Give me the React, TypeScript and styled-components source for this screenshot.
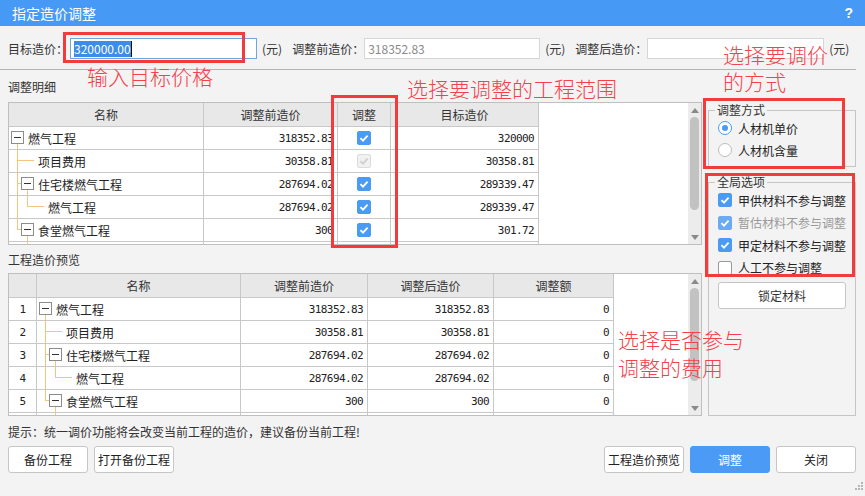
import React from "react";
import styled, { createGlobalStyle } from "styled-components";

const GlobalStyle = createGlobalStyle`
  html, body {
    margin: 0;
    padding: 0;
    background: #f3f3f3;
  }
  body {
    font-family: "Noto Sans CJK SC", "Noto Sans", sans-serif;
    font-size: 12px;
    color: #333;
  }
`;

type TreeKind = "root" | "leaf1" | "branch" | "leaf2" | "branchLast" | "tail";
type CheckState = "on" | "off" | "disabled" | "dim";

interface CostRow {
  name: string;
  kind: TreeKind;
  before: string;
  check: CheckState;
  target: string;
  after: string;
  delta: string;
}

const rows: CostRow[] = [
  { name: "燃气工程", kind: "root", before: "318352.83", check: "on", target: "320000", after: "318352.83", delta: "0" },
  { name: "项目费用", kind: "leaf1", before: "30358.81", check: "disabled", target: "30358.81", after: "30358.81", delta: "0" },
  { name: "住宅楼燃气工程", kind: "branch", before: "287694.02", check: "on", target: "289339.47", after: "287694.02", delta: "0" },
  { name: "燃气工程", kind: "leaf2", before: "287694.02", check: "on", target: "289339.47", after: "287694.02", delta: "0" },
  { name: "食堂燃气工程", kind: "branchLast", before: "300", check: "on", target: "301.72", after: "300", delta: "0" },
  { name: "", kind: "tail", before: "", check: "off", target: "", after: "", delta: "" },
];

const detailCols = "195px 134px 53px 148px";
const previewCols = "28px 204px 127px 126px 120px";
const LINE = "#f5c580";

const ExpandBox = ({ x }: { x: number }) => (
  <>
    <rect x={x + 0.5} y={4.5} width={12} height={12} fill="#fff" stroke="#8c8c8c" />
    <line x1={x + 3} y1={10.5} x2={x + 10} y2={10.5} stroke="#333" />
  </>
);

const TreeGuide = ({ kind }: { kind: TreeKind }) => {
  const w = kind === "root" ? 19 : kind === "leaf2" ? 39 : 29;
  return (
    <GuideSvg width={w} height={22} viewBox={`0 0 ${w} 22`}>
      {kind === "root" && (
        <>
          <line x1={8.5} y1={17} x2={8.5} y2={22} stroke={LINE} />
          <ExpandBox x={2} />
        </>
      )}
      {kind === "leaf1" && (
        <>
          <line x1={8.5} y1={0} x2={8.5} y2={22} stroke={LINE} />
          <line x1={8} y1={10.5} x2={25} y2={10.5} stroke={LINE} />
        </>
      )}
      {kind === "branch" && (
        <>
          <line x1={8.5} y1={0} x2={8.5} y2={22} stroke={LINE} />
          <line x1={8} y1={10.5} x2={12} y2={10.5} stroke={LINE} />
          <line x1={18.5} y1={17} x2={18.5} y2={22} stroke={LINE} />
          <ExpandBox x={12} />
        </>
      )}
      {kind === "leaf2" && (
        <>
          <line x1={8.5} y1={0} x2={8.5} y2={22} stroke={LINE} />
          <line x1={18.5} y1={0} x2={18.5} y2={10.5} stroke={LINE} />
          <line x1={18} y1={10.5} x2={35} y2={10.5} stroke={LINE} />
        </>
      )}
      {kind === "branchLast" && (
        <>
          <line x1={8.5} y1={0} x2={8.5} y2={10.5} stroke={LINE} />
          <line x1={8} y1={10.5} x2={12} y2={10.5} stroke={LINE} />
          <line x1={18.5} y1={17} x2={18.5} y2={22} stroke={LINE} />
          <ExpandBox x={12} />
        </>
      )}
      {kind === "tail" && <line x1={18.5} y1={0} x2={18.5} y2={22} stroke={LINE} />}
    </GuideSvg>
  );
};

const Check = ({ state }: { state: CheckState }) => (
  <CheckBox $state={state}>
    {state !== "off" && (
      <svg width="14" height="14" viewBox="0 0 14 14">
        <path
          d="M3.4 7.2 L6 9.7 L10.6 4.6"
          fill="none"
          stroke={state === "disabled" ? "#cfcfcf" : "#fff"}
          strokeWidth="1.8"
        />
      </svg>
    )}
  </CheckBox>
);

const Scrollbar = () => (
  <ScrollTrack>
    <ArrowBox>
      <svg width="8" height="5" viewBox="0 0 8 5">
        <polygon points="0,5 8,5 4,0" fill="#8a8a8a" />
      </svg>
    </ArrowBox>
    <Thumb />
    <Spacer />
    <ArrowBox>
      <svg width="8" height="5" viewBox="0 0 8 5">
        <polygon points="0,0 8,0 4,5" fill="#8a8a8a" />
      </svg>
    </ArrowBox>
  </ScrollTrack>
);

export default function App() {
  return (
    <>
      <GlobalStyle />
      <Dialog>
        <TitleBar>
          <span>指定造价调整</span>
          <Help>?</Help>
        </TitleBar>
        <Body>
          <TopRow>
            <FieldLabel $gap={2}>目标造价：</FieldLabel>
            <InputBox $w={187} $focused>
              <Selected>320000.00</Selected>
              <Caret />
            </InputBox>
            <Unit>(元)</Unit>
            <FieldLabel $gap={0}>调整前造价：</FieldLabel>
            <InputBox $w={176}>
              <Muted>318352.83</Muted>
            </InputBox>
            <Unit>(元)</Unit>
            <FieldLabel $gap={0}>调整后造价：</FieldLabel>
            <InputBox $w={177} />
            <Unit $last>(元)</Unit>
          </TopRow>
          <Divider />
          <Main>
            <LeftCol>
              <SectionLabel $h={32}>调整明细</SectionLabel>
              <Frame>
                <TableArea>
                  <Row $cols={detailCols} $head>
                    <Cell $head $align="center">名称</Cell>
                    <Cell $head $align="center">调整前造价</Cell>
                    <Cell $head $align="center">调整</Cell>
                    <Cell $head $align="center">目标造价</Cell>
                  </Row>
                  {rows.map((r, i) => (
                    <Row $cols={detailCols} key={i}>
                      <TreeCell>
                        <TreeGuide kind={r.kind} />
                        <span>{r.name}</span>
                      </TreeCell>
                      <Cell $align="right" $mono>{r.before}</Cell>
                      <Cell $align="center">{r.kind !== "tail" && <Check state={r.check} />}</Cell>
                      <Cell $align="right" $mono>{r.target}</Cell>
                    </Row>
                  ))}
                </TableArea>
                <Scrollbar />
              </Frame>
              <SectionLabel $h={28}>工程造价预览</SectionLabel>
              <Frame>
                <TableArea>
                  <Row $cols={previewCols} $head>
                    <Cell $head />
                    <Cell $head $align="center">名称</Cell>
                    <Cell $head $align="center">调整前造价</Cell>
                    <Cell $head $align="center">调整后造价</Cell>
                    <Cell $head $align="center">调整额</Cell>
                  </Row>
                  {rows.map((r, i) => (
                    <Row $cols={previewCols} key={i}>
                      <Cell $align="center" $mono>{r.kind !== "tail" ? i + 1 : ""}</Cell>
                      <TreeCell>
                        <TreeGuide kind={r.kind} />
                        <span>{r.name}</span>
                      </TreeCell>
                      <Cell $align="right" $mono>{r.before}</Cell>
                      <Cell $align="right" $mono>{r.after}</Cell>
                      <Cell $align="right" $mono>{r.delta}</Cell>
                    </Row>
                  ))}
                </TableArea>
                <Scrollbar />
              </Frame>
            </LeftCol>
            <RightCol>
              <Group>
                <Legend>调整方式</Legend>
                <OptionRow $h={22}>
                  <Radio $on />
                  <span>人材机单价</span>
                </OptionRow>
                <OptionRow $h={22}>
                  <Radio />
                  <span>人材机含量</span>
                </OptionRow>
              </Group>
              <Group $grow>
                <Legend>全局选项</Legend>
                <OptionRow $h={22.5}>
                  <Check state="on" />
                  <span>甲供材料不参与调整</span>
                </OptionRow>
                <OptionRow $h={22.5} $muted>
                  <Check state="dim" />
                  <span>暂估材料不参与调整</span>
                </OptionRow>
                <OptionRow $h={22.5}>
                  <Check state="on" />
                  <span>甲定材料不参与调整</span>
                </OptionRow>
                <OptionRow $h={22.5}>
                  <Check state="off" />
                  <span>人工不参与调整</span>
                </OptionRow>
                <LockButton>锁定材料</LockButton>
              </Group>
            </RightCol>
          </Main>
          <Hint>提示：统一调价功能将会改变当前工程的造价，建议备份当前工程!</Hint>
          <Footer>
            <ButtonGroup>
              <Button>备份工程</Button>
              <Button>打开备份工程</Button>
            </ButtonGroup>
            <ButtonGroup>
              <Button>工程造价预览</Button>
              <Button $primary>调整</Button>
              <Button>关闭</Button>
            </ButtonGroup>
          </Footer>
        </Body>

        <Overlay>
          <RedFrame $x={63} $y={32} $w={182} $h={31} />
          <RedFrame $x={331} $y={95} $w={67} $h={153} />
          <RedFrame $x={703} $y={98} $w={142} $h={71} />
          <RedFrame $x={705} $y={173} $w={150} $h={104} />
          <Note $x={87} $y={66} $lh={21}>输入目标价格</Note>
          <Note $x={407} $y={78} $lh={21}>选择要调整的工程范围</Note>
          <Note $x={723} $y={41} $lh={27}>{"选择要调价\n的方式"}</Note>
          <Note $x={618} $y={325} $lh={28}>{"选择是否参与\n调整的费用"}</Note>
        </Overlay>

        <Grip width="8" height="8" viewBox="0 0 8 8">
          <rect x="6" y="0" width="2" height="2" fill="#b5b5b5" />
          <rect x="3" y="3" width="2" height="2" fill="#b5b5b5" />
          <rect x="6" y="3" width="2" height="2" fill="#b5b5b5" />
          <rect x="0" y="6" width="2" height="2" fill="#b5b5b5" />
          <rect x="3" y="6" width="2" height="2" fill="#b5b5b5" />
          <rect x="6" y="6" width="2" height="2" fill="#b5b5b5" />
        </Grip>
      </Dialog>
    </>
  );
}

const Dialog = styled.div`
  position: relative;
  width: 865px;
  height: 496px;
  background: #f3f3f3;
  overflow: hidden;
`;

const TitleBar = styled.div`
  height: 26px;
  background: #469af5;
  color: #fff;
  display: flex;
  align-items: center;
  justify-content: space-between;
  padding: 0 12px;
  font-size: 14px;
`;

const Help = styled.span`
  font-family: "Liberation Sans", Arial, sans-serif;
  font-weight: bold;
  font-size: 14px;
`;

const Body = styled.div`
  padding: 0 9px 0 8px;
`;

const TopRow = styled.div`
  display: flex;
  align-items: center;
  height: 21px;
  margin-top: 12px;
  white-space: nowrap;
`;

const FieldLabel = styled.span<{ $gap: number }>`
  flex-shrink: 0;
  color: #333;
  margin-right: ${({ $gap }) => $gap}px;
`;

const InputBox = styled.div<{ $w: number; $focused?: boolean }>`
  box-sizing: border-box;
  flex-shrink: 0;
  width: ${({ $w }) => $w}px;
  height: 21px;
  border: 1px solid ${({ $focused }) => ($focused ? "#6ea5e2" : "#d6d6d6")};
  background: #fff;
  display: flex;
  align-items: center;
  padding: 0 3px;
`;

const Selected = styled.span`
  background: #3b8de7;
  color: #fff;
  line-height: 16px;
  height: 16px;
  font-size: 12px;
`;

const Caret = styled.span`
  width: 1px;
  height: 16px;
  background: #111;
`;

const Muted = styled.span`
  color: #8a8a8a;
`;

const Unit = styled.span<{ $last?: boolean }>`
  flex-shrink: 0;
  margin: 0 ${({ $last }) => ($last ? 0 : 10)}px 0 5px;
  color: #333;
`;

const Divider = styled.div`
  height: 1px;
  width: 856px;
  margin: 10px 0 0 -8px;
  background: #b4b4b4;
`;

const Main = styled.div`
  display: grid;
  grid-template-columns: 694px 148px;
  column-gap: 6px;
`;

const LeftCol = styled.div`
  display: flex;
  flex-direction: column;
`;

const SectionLabel = styled.div<{ $h: number }>`
  height: ${({ $h }) => $h}px;
  display: flex;
  align-items: center;
  padding-top: 1px;
  box-sizing: border-box;
  color: #333;
`;

const Frame = styled.div`
  display: flex;
  height: 143px;
  box-sizing: border-box;
  border: 1px solid #bfbfbf;
  background: #fff;
`;

const TableArea = styled.div`
  flex: 1;
  overflow: hidden;
`;

const Row = styled.div<{ $cols: string; $head?: boolean }>`
  display: grid;
  grid-template-columns: ${({ $cols }) => $cols};
  height: ${({ $head }) => ($head ? 24 : 23)}px;
`;

const Cell = styled.div<{ $align?: "left" | "center" | "right"; $head?: boolean; $mono?: boolean }>`
  box-sizing: border-box;
  border-right: 1px solid #c8c8c8;
  border-bottom: 1px solid #c8c8c8;
  background: ${({ $head }) => ($head ? "#e8e8e8" : "#fff")};
  display: flex;
  align-items: center;
  justify-content: ${({ $align }) =>
    $align === "right" ? "flex-end" : $align === "center" ? "center" : "flex-start"};
  padding: 0 4px;
  overflow: hidden;
  white-space: nowrap;
  color: ${({ $head }) => ($head ? "#333" : "#222")};
  font-family: ${({ $mono }) =>
    $mono ? '"DejaVu Sans Mono", monospace' : '"Noto Sans CJK SC", sans-serif'};
  font-size: ${({ $mono }) => ($mono ? "11px" : "12px")};
  letter-spacing: ${({ $mono }) => ($mono ? "-0.6px" : "0")};
`;

const TreeCell = styled.div`
  box-sizing: border-box;
  border-right: 1px solid #c8c8c8;
  border-bottom: 1px solid #c8c8c8;
  display: flex;
  align-items: center;
  overflow: hidden;
  white-space: nowrap;
  color: #222;
`;

const GuideSvg = styled.svg`
  display: block;
  flex-shrink: 0;
`;

const CheckBox = styled.span<{ $state: CheckState }>`
  box-sizing: border-box;
  display: inline-flex;
  width: 14px;
  height: 14px;
  flex-shrink: 0;
  border-radius: 2px;
  background: ${({ $state }) =>
    $state === "on" ? "#4b9bf5" : $state === "dim" ? "#6eaaf0" : $state === "disabled" ? "#f1f1f1" : "#fff"};
  border: 1px solid
    ${({ $state }) =>
      $state === "on" ? "#4b9bf5" : $state === "dim" ? "#6eaaf0" : $state === "disabled" ? "#dcdcdc" : "#9a9a9a"};
  svg {
    margin: -1px;
  }
`;

const ScrollTrack = styled.div`
  width: 13px;
  background: #ececec;
  display: flex;
  flex-direction: column;
  align-items: center;
`;

const ArrowBox = styled.div`
  height: 14px;
  width: 100%;
  display: flex;
  align-items: center;
  justify-content: center;
`;

const Thumb = styled.div`
  width: 9px;
  height: 93px;
  border-radius: 5px;
  background: #c2c2c2;
`;

const Spacer = styled.div`
  flex: 1;
`;

const RightCol = styled.div`
  display: flex;
  flex-direction: column;
  gap: 8px;
  padding-top: 33px;
`;

const Group = styled.fieldset<{ $grow?: boolean }>`
  margin: 0;
  padding: 0 9px 5px 9px;
  border: 1px solid #c6c6c6;
  min-width: 0;
  ${({ $grow }) => ($grow ? "flex: 1;" : "")}
`;

const Legend = styled.legend`
  padding: 0 2px;
  margin-left: -3px;
  font-size: 12px;
  line-height: 14px;
  color: #333;
`;

const OptionRow = styled.div<{ $h: number; $muted?: boolean }>`
  height: ${({ $h }) => $h}px;
  display: flex;
  align-items: center;
  gap: 6px;
  white-space: nowrap;
  color: ${({ $muted }) => ($muted ? "#9a9a9a" : "#222")};
`;

const Radio = styled.span<{ $on?: boolean }>`
  box-sizing: border-box;
  width: 14px;
  height: 14px;
  border-radius: 50%;
  border: 1px solid ${({ $on }) => ($on ? "#4b9bf5" : "#bdbdbd")};
  background: #fff;
  display: flex;
  align-items: center;
  justify-content: center;
  &::after {
    content: "";
    width: 6px;
    height: 6px;
    border-radius: 50%;
    background: ${({ $on }) => ($on ? "#4b9bf5" : "transparent")};
  }
`;

const LockButton = styled.button`
  display: block;
  width: 100%;
  height: 27px;
  margin-top: 3px;
  box-sizing: border-box;
  border: 1px solid #c6c6c6;
  border-radius: 3px;
  background: #fff;
  color: #333;
  font-family: "Noto Sans CJK SC", sans-serif;
  font-size: 12px;
  padding: 0;
`;

const Hint = styled.div`
  height: 30px;
  display: flex;
  align-items: center;
  color: #333;
  white-space: nowrap;
`;

const Footer = styled.div`
  display: flex;
  justify-content: space-between;
`;

const ButtonGroup = styled.div`
  display: flex;
  gap: 6px;
`;

const Button = styled.button<{ $primary?: boolean }>`
  width: 80px;
  height: 27px;
  box-sizing: border-box;
  border: 1px solid ${({ $primary }) => ($primary ? "#4b9bf6" : "#c6c6c6")};
  border-radius: 3px;
  background: ${({ $primary }) => ($primary ? "#4b9bf6" : "#fff")};
  color: ${({ $primary }) => ($primary ? "#fff" : "#222")};
  font-family: "Noto Sans CJK SC", sans-serif;
  font-size: 12px;
  padding: 0;
  white-space: nowrap;
`;

const Overlay = styled.div`
  position: absolute;
  inset: 0;
  pointer-events: none;
`;

const RedFrame = styled.div<{ $x: number; $y: number; $w: number; $h: number }>`
  position: absolute;
  left: ${({ $x }) => $x}px;
  top: ${({ $y }) => $y}px;
  width: ${({ $w }) => $w}px;
  height: ${({ $h }) => $h}px;
  box-sizing: border-box;
  border: 3px solid #f23b3b;
`;

const Note = styled.div<{ $x: number; $y: number; $lh: number }>`
  position: absolute;
  left: ${({ $x }) => $x}px;
  top: ${({ $y }) => $y}px;
  font-family: "Noto Sans CJK SC", sans-serif;
  font-weight: 300;
  font-size: 21px;
  line-height: ${({ $lh }) => $lh}px;
  color: #f4414a;
  white-space: pre;
`;

const Grip = styled.svg`
  position: absolute;
  right: 2px;
  bottom: 6px;
`;
